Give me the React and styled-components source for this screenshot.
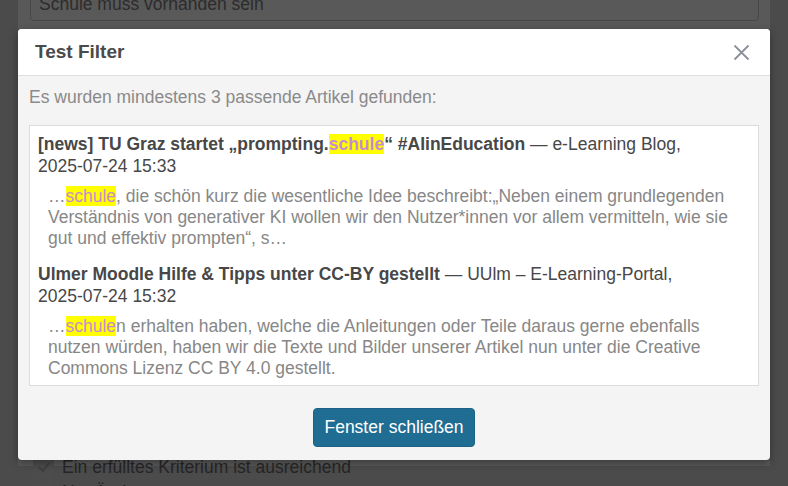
import React from 'react';
import styled, { createGlobalStyle } from 'styled-components';

const GlobalStyle = createGlobalStyle`
  html, body {
    margin: 0;
    padding: 0;
    width: 788px;
    height: 486px;
    overflow: hidden;
    font-family: "Liberation Sans", Arial, sans-serif;
  }
`;

const Page = styled.div`
  position: relative;
  width: 788px;
  height: 486px;
  background: #4b4b4b;
  overflow: hidden;
`;

const Column = styled.div`
  margin: 0 18px;
  height: 100%;
  background: #595959;
  padding: 0 11px 0 12px;
  box-sizing: border-box;
`;

const FakeInput = styled.div`
  margin-top: -20px;
  height: 41px;
  border: 1px solid #474747;
  border-radius: 4px;
  padding: 13px 8px 0;
  box-sizing: border-box;
  color: #2c2c2c;
  font-size: 17.5px;
  line-height: 20px;
`;

const CheckList = styled.div`
  margin-top: 435px;
  display: flex;
  flex-direction: column;
  gap: 3px;
  padding-left: 3px;
`;

const CheckRow = styled.div`
  display: flex;
  align-items: center;
  gap: 8px;
  color: #262626;
  font-size: 17.5px;
  line-height: 22px;
`;

const CheckBox = styled.div`
  width: 21px;
  height: 21px;
  border-radius: 3px;
  background: #4c4c4c;
  display: flex;
  align-items: center;
  justify-content: center;
`;

const Modal = styled.div`
  position: absolute;
  left: 18px;
  top: 29px;
  width: 752px;
  height: 431px;
  background: #f4f4f4;
  border-radius: 4px;
  box-shadow: 0 3px 8px rgba(0, 0, 0, 0.35);
  display: flex;
  flex-direction: column;
  overflow: hidden;
`;

const Header = styled.div`
  height: 47px;
  background: #fff;
  border-bottom: 1px solid #dedede;
  display: flex;
  align-items: center;
  justify-content: space-between;
  padding: 0 20px 0 17px;
  box-sizing: border-box;
  flex-shrink: 0;
`;

const Title = styled.h5`
  margin: 0;
  font-size: 19px;
  font-weight: bold;
  color: #4a4a4a;
`;

const CloseButton = styled.button`
  border: none;
  background: none;
  padding: 0;
  width: 17px;
  height: 17px;
  cursor: pointer;
  display: flex;
`;

const Body = styled.div`
  padding: 10px 11px 0;
  flex: 1;
`;

const Intro = styled.p`
  margin: 0 0 17px;
  color: #8a8a8a;
  font-size: 17.5px;
  line-height: 22px;
`;

const Results = styled.div`
  background: #fff;
  border: 1px solid #dcdcdc;
  padding: 7px 8px 6px;
  height: 261px;
  box-sizing: border-box;
`;

const Item = styled.div`
  margin-bottom: 14px;
`;

const ItemHead = styled.div`
  color: #474747;
  font-size: 17.5px;
  line-height: 22px;
`;

const ItemTitle = styled.b`
  font-weight: bold;
`;

const Snippet = styled.div`
  margin-top: 9px;
  padding-left: 10px;
  color: #878787;
  font-size: 17.5px;
  line-height: 21px;
`;

const Mark = styled.span`
  background: #ffff00;
  color: #c98bd0;
`;

const Footer = styled.div`
  display: flex;
  justify-content: center;
  padding: 22px 0 14px;
`;

const PrimaryButton = styled.button`
  background: #1f6d93;
  color: #fff;
  border: 1px solid #1b6286;
  border-radius: 4px;
  height: 39px;
  padding: 0 10px;
  font-family: "Liberation Sans", Arial, sans-serif;
  font-size: 17.5px;
  cursor: pointer;
`;

const CloseIcon = () => (
  <svg width="17" height="17" viewBox="0 0 17 17">
    <path d="M1.5 1.5 L15.5 15.5 M15.5 1.5 L1.5 15.5" stroke="#8c9099" strokeWidth="1.8" fill="none" />
  </svg>
);

const Check = () => (
  <svg width="14" height="14" viewBox="0 0 14 14">
    <path d="M2 7 L6 11 L12 3" stroke="#3e3e3e" strokeWidth="2" fill="none" />
  </svg>
);

const results = [
  {
    title: (
      <>
        [news] TU Graz startet „prompting.<Mark>schule</Mark>“ #AIinEducation
      </>
    ),
    source: 'e-Learning Blog',
    date: '2025-07-24 15:33',
    snippet: (
      <>
        …<Mark>schule</Mark>, die schön kurz die wesentliche Idee beschreibt:„Neben einem grundlegenden
        Verständnis von generativer KI wollen wir den Nutzer*innen vor allem vermitteln, wie sie
        gut und effektiv prompten“, s…
      </>
    ),
  },
  {
    title: <>Ulmer Moodle Hilfe &amp; Tipps unter CC-BY gestellt</>,
    source: 'UUlm – E-Learning-Portal',
    date: '2025-07-24 15:32',
    snippet: (
      <>
        …<Mark>schule</Mark>n erhalten haben, welche die Anleitungen oder Teile daraus gerne ebenfalls
        nutzen würden, haben wir die Texte und Bilder unserer Artikel nun unter die Creative
        Commons Lizenz CC BY 4.0 gestellt.
      </>
    ),
  },
];

export default function App() {
  return (
    <Page>
      <GlobalStyle />
      <Column>
        <FakeInput>Schule muss vorhanden sein</FakeInput>
        <CheckList>
          <CheckRow>
            <CheckBox>
              <Check />
            </CheckBox>
            Ein erfülltes Kriterium ist ausreichend
          </CheckRow>
          <CheckRow>
            <CheckBox />
            Nur Änderungen
          </CheckRow>
        </CheckList>
      </Column>

      <Modal>
        <Header>
          <Title>Test Filter</Title>
          <CloseButton aria-label="Schließen">
            <CloseIcon />
          </CloseButton>
        </Header>
        <Body>
          <Intro>Es wurden mindestens 3 passende Artikel gefunden:</Intro>
          <Results>
            {results.map((r, i) => (
              <Item key={i}>
                <ItemHead>
                  <ItemTitle>{r.title}</ItemTitle> — {r.source},
                  <br />
                  {r.date}
                </ItemHead>
                <Snippet>{r.snippet}</Snippet>
              </Item>
            ))}
          </Results>
        </Body>
        <Footer>
          <PrimaryButton>Fenster schließen</PrimaryButton>
        </Footer>
      </Modal>
    </Page>
  );
}
